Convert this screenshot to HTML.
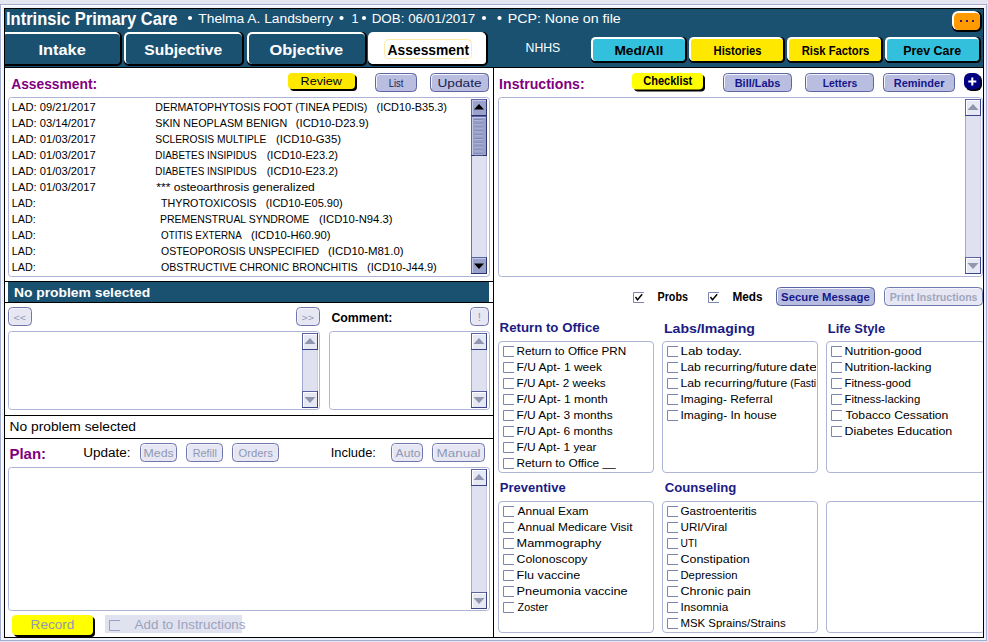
<!DOCTYPE html><html><head><meta charset="utf-8"><style>html,body{margin:0;padding:0;background:#e4e6f2;overflow:hidden}</style></head><body><svg width="988" height="642" viewBox="0 0 988 642" font-family='"Liberation Sans", sans-serif' style="display:block">
<rect x="0" y="0" width="988" height="642" fill="#e4e6f2" />
<rect x="0" y="4" width="987" height="637" fill="#a4acd0" />
<rect x="1" y="5" width="985" height="635" fill="#f0f2fc" />
<rect x="1" y="5" width="985" height="1" fill="#fff" />
<rect x="1" y="5" width="1" height="635" fill="#fff" />
<rect x="4" y="8" width="980" height="630" fill="#000" />
<rect x="5" y="9" width="978" height="628" fill="#fff" />
<defs><clipPath id="main"><rect x="5" y="9" width="978" height="628"/></clipPath></defs>
<g clip-path="url(#main)">
<rect x="5" y="9" width="978" height="58" fill="#1b5170" />
<text x="6.00" y="25" font-size="18" font-weight="bold" fill="#fff" textLength="171.50" lengthAdjust="spacingAndGlyphs" style="white-space:pre" >Intrinsic Primary Care</text>
<circle cx="190" cy="18" r="2.1" fill="#fff"/>
<circle cx="341.5" cy="18" r="2.1" fill="#fff"/>
<circle cx="364" cy="18" r="2.1" fill="#fff"/>
<circle cx="484" cy="18" r="2.1" fill="#fff"/>
<circle cx="499.5" cy="18" r="2.1" fill="#fff"/>
<text x="198.30" y="23" font-size="12.5" font-weight="normal" fill="#fff" textLength="134.90" lengthAdjust="spacingAndGlyphs" style="white-space:pre" >Thelma A. Landsberry</text>
<text x="351.50" y="23" font-size="12.5" font-weight="normal" fill="#fff" style="white-space:pre" >1</text>
<text x="371.70" y="23" font-size="12.5" font-weight="normal" fill="#fff" textLength="103.50" lengthAdjust="spacingAndGlyphs" style="white-space:pre" >DOB: 06/01/2017</text>
<text x="507.70" y="23" font-size="12.5" font-weight="normal" fill="#fff" textLength="113.10" lengthAdjust="spacingAndGlyphs" style="white-space:pre" >PCP: None on file</text>
<rect x="952" y="11" width="30" height="21" fill="#000" rx="6" ry="6" />
<rect x="952" y="11" width="28" height="19" fill="#fff" rx="6" ry="6" />
<rect x="954" y="13" width="26" height="17" fill="#ff9a00" rx="4.5" ry="4.5" />
<rect x="960" y="20" width="2" height="2" fill="#3a1a6a" />
<rect x="966" y="20" width="2" height="2" fill="#3a1a6a" />
<rect x="972" y="20" width="2" height="2" fill="#3a1a6a" />
<rect x="1" y="32" width="121" height="34" fill="#000" rx="5" ry="5" />
<rect x="1" y="32" width="119" height="32" fill="#fff" rx="5" ry="5" />
<rect x="3" y="34" width="117" height="30" fill="#1b5170" rx="3.5" ry="3.5" />
<text x="38.49" y="55" font-size="15" font-weight="bold" fill="#fff" textLength="47.32" lengthAdjust="spacingAndGlyphs" style="white-space:pre" >Intake</text>
<rect x="124" y="32" width="120" height="34" fill="#000" rx="5" ry="5" />
<rect x="124" y="32" width="118" height="32" fill="#fff" rx="5" ry="5" />
<rect x="126" y="34" width="116" height="30" fill="#1b5170" rx="3.5" ry="3.5" />
<text x="144.30" y="55" font-size="15" font-weight="bold" fill="#fff" textLength="77.90" lengthAdjust="spacingAndGlyphs" style="white-space:pre" >Subjective</text>
<rect x="247" y="32" width="120" height="34" fill="#000" rx="5" ry="5" />
<rect x="247" y="32" width="118" height="32" fill="#fff" rx="5" ry="5" />
<rect x="249" y="34" width="116" height="30" fill="#1b5170" rx="3.5" ry="3.5" />
<text x="269.50" y="55" font-size="15" font-weight="bold" fill="#fff" textLength="73.70" lengthAdjust="spacingAndGlyphs" style="white-space:pre" >Objective</text>
<rect x="368" y="32" width="120" height="34" fill="#000" rx="5" ry="5" />
<rect x="368" y="32" width="118" height="32" fill="#fff" rx="5" ry="5" />
<rect x="370" y="34" width="116" height="30" fill="#fff" rx="3.5" ry="3.5" />
<rect x="384.5" y="39.5" width="87" height="19" fill="none" stroke="#fde9a8" stroke-width="1" rx="4" ry="4" />
<text x="387.60" y="55" font-size="15" font-weight="bold" fill="#000" textLength="81.50" lengthAdjust="spacingAndGlyphs" style="white-space:pre" >Assessment</text>
<text x="525.60" y="52" font-size="12" font-weight="normal" fill="#fff" textLength="34.70" lengthAdjust="spacingAndGlyphs" style="white-space:pre" >NHHS</text>
<rect x="591" y="37" width="96" height="26" fill="#000" rx="4.5" ry="4.5" />
<rect x="591" y="37" width="94" height="24" fill="#fff" rx="4.5" ry="4.5" />
<rect x="593" y="39" width="92" height="22" fill="#33c0dc" rx="3.0" ry="3.0" />
<text x="614.40" y="54.7" font-size="12" font-weight="bold" fill="#000" textLength="48.91" lengthAdjust="spacingAndGlyphs" style="white-space:pre" >Med/All</text>
<rect x="689" y="37" width="96" height="26" fill="#000" rx="4.5" ry="4.5" />
<rect x="689" y="37" width="94" height="24" fill="#fff" rx="4.5" ry="4.5" />
<rect x="691" y="39" width="92" height="22" fill="#ffe800" rx="3.0" ry="3.0" />
<text x="713.60" y="54.7" font-size="12" font-weight="bold" fill="#000" textLength="47.91" lengthAdjust="spacingAndGlyphs" style="white-space:pre" >Histories</text>
<rect x="787" y="37" width="96" height="26" fill="#000" rx="4.5" ry="4.5" />
<rect x="787" y="37" width="94" height="24" fill="#fff" rx="4.5" ry="4.5" />
<rect x="789" y="39" width="92" height="22" fill="#ffe800" rx="3.0" ry="3.0" />
<text x="801.70" y="54.7" font-size="12" font-weight="bold" fill="#000" textLength="67.70" lengthAdjust="spacingAndGlyphs" style="white-space:pre" >Risk Factors</text>
<rect x="885" y="37" width="96" height="26" fill="#000" rx="4.5" ry="4.5" />
<rect x="885" y="37" width="94" height="24" fill="#fff" rx="4.5" ry="4.5" />
<rect x="887" y="39" width="92" height="22" fill="#33c0dc" rx="3.0" ry="3.0" />
<text x="903.20" y="54.7" font-size="12" font-weight="bold" fill="#000" textLength="58.10" lengthAdjust="spacingAndGlyphs" style="white-space:pre" >Prev Care</text>
<rect x="4" y="67" width="980" height="1" fill="#000" />
<rect x="493" y="67" width="1" height="570" fill="#000" />
<text x="11.20" y="89" font-size="15" font-weight="bold" fill="#800080" textLength="85.90" lengthAdjust="spacingAndGlyphs" style="white-space:pre" >Assessment:</text>
<rect x="290" y="75" width="67" height="16" fill="#000" rx="4" ry="4" />
<rect x="288" y="73" width="67" height="16" fill="#ffe800" rx="4" ry="4" />
<text x="300.61" y="85" font-size="11.5" font-weight="normal" fill="#000" textLength="41.29" lengthAdjust="spacingAndGlyphs" style="white-space:pre" >Review</text>
<rect x="375.5" y="73.5" width="41" height="18" fill="#b9bee0" stroke="#5e66a2" stroke-width="1" rx="4" ry="4" />
<path d="M376.5,87.5 V77.5 Q376.5,74.5 379.5,74.5 H412" fill="none" stroke="#f4f5fc" stroke-width="1"/>
<text x="388.76" y="86.7" font-size="11" font-weight="normal" fill="#202050" textLength="14.66" lengthAdjust="spacingAndGlyphs" style="white-space:pre" >List</text>
<rect x="430.5" y="73.5" width="58" height="18" fill="#b9bee0" stroke="#5e66a2" stroke-width="1" rx="4" ry="4" />
<path d="M431.5,87.5 V77.5 Q431.5,74.5 434.5,74.5 H484" fill="none" stroke="#f4f5fc" stroke-width="1"/>
<text x="437.49" y="86.7" font-size="11" font-weight="normal" fill="#202050" textLength="44.11" lengthAdjust="spacingAndGlyphs" style="white-space:pre" >Update</text>
<rect x="8.5" y="97.5" width="481" height="179" fill="#fff" stroke="#aeb4d6" stroke-width="1" rx="3" ry="3" />
<text x="11.80" y="110.8" font-size="11" font-weight="normal" fill="#000" textLength="83.90" lengthAdjust="spacingAndGlyphs" style="white-space:pre" >LAD: 09/21/2017</text>
<text x="155.30" y="110.8" font-size="11" font-weight="normal" fill="#000" textLength="212.10" lengthAdjust="spacingAndGlyphs" style="white-space:pre" >DERMATOPHYTOSIS FOOT (TINEA PEDIS)</text>
<text x="376.50" y="110.8" font-size="11" font-weight="normal" fill="#000" textLength="70.50" lengthAdjust="spacingAndGlyphs" style="white-space:pre" >(ICD10-B35.3)</text>
<text x="11.80" y="126.8" font-size="11" font-weight="normal" fill="#000" textLength="83.90" lengthAdjust="spacingAndGlyphs" style="white-space:pre" >LAD: 03/14/2017</text>
<text x="155.30" y="126.8" font-size="11" font-weight="normal" fill="#000" textLength="131.90" lengthAdjust="spacingAndGlyphs" style="white-space:pre" >SKIN NEOPLASM BENIGN</text>
<text x="295.80" y="126.8" font-size="11" font-weight="normal" fill="#000" textLength="72.90" lengthAdjust="spacingAndGlyphs" style="white-space:pre" >(ICD10-D23.9)</text>
<text x="11.80" y="142.8" font-size="11" font-weight="normal" fill="#000" textLength="83.90" lengthAdjust="spacingAndGlyphs" style="white-space:pre" >LAD: 01/03/2017</text>
<text x="155.30" y="142.8" font-size="11" font-weight="normal" fill="#000" textLength="111.10" lengthAdjust="spacingAndGlyphs" style="white-space:pre" >SCLEROSIS MULTIPLE</text>
<text x="276.10" y="142.8" font-size="11" font-weight="normal" fill="#000" textLength="64.89" lengthAdjust="spacingAndGlyphs" style="white-space:pre" >(ICD10-G35)</text>
<text x="11.80" y="158.8" font-size="11" font-weight="normal" fill="#000" textLength="83.90" lengthAdjust="spacingAndGlyphs" style="white-space:pre" >LAD: 01/03/2017</text>
<text x="155.31" y="158.8" font-size="11" font-weight="normal" fill="#000" textLength="101.29" lengthAdjust="spacingAndGlyphs" style="white-space:pre" >DIABETES INSIPIDUS</text>
<text x="266.70" y="158.8" font-size="11" font-weight="normal" fill="#000" textLength="71.30" lengthAdjust="spacingAndGlyphs" style="white-space:pre" >(ICD10-E23.2)</text>
<text x="11.80" y="174.8" font-size="11" font-weight="normal" fill="#000" textLength="83.90" lengthAdjust="spacingAndGlyphs" style="white-space:pre" >LAD: 01/03/2017</text>
<text x="155.31" y="174.8" font-size="11" font-weight="normal" fill="#000" textLength="101.29" lengthAdjust="spacingAndGlyphs" style="white-space:pre" >DIABETES INSIPIDUS</text>
<text x="266.70" y="174.8" font-size="11" font-weight="normal" fill="#000" textLength="71.30" lengthAdjust="spacingAndGlyphs" style="white-space:pre" >(ICD10-E23.2)</text>
<text x="11.80" y="190.8" font-size="11" font-weight="normal" fill="#000" textLength="83.90" lengthAdjust="spacingAndGlyphs" style="white-space:pre" >LAD: 01/03/2017</text>
<text x="156.30" y="190.8" font-size="11" font-weight="normal" fill="#000" textLength="158.50" lengthAdjust="spacingAndGlyphs" style="white-space:pre" >*** osteoarthrosis generalized</text>
<text x="11.79" y="206.8" font-size="11" font-weight="normal" fill="#000" textLength="23.92" lengthAdjust="spacingAndGlyphs" style="white-space:pre" >LAD:</text>
<text x="161.00" y="206.8" font-size="11" font-weight="normal" fill="#000" textLength="95.49" lengthAdjust="spacingAndGlyphs" style="white-space:pre" >THYROTOXICOSIS</text>
<text x="265.70" y="206.8" font-size="11" font-weight="normal" fill="#000" textLength="77.11" lengthAdjust="spacingAndGlyphs" style="white-space:pre" >(ICD10-E05.90)</text>
<text x="11.79" y="222.8" font-size="11" font-weight="normal" fill="#000" textLength="23.92" lengthAdjust="spacingAndGlyphs" style="white-space:pre" >LAD:</text>
<text x="160.00" y="222.8" font-size="11" font-weight="normal" fill="#000" textLength="149.30" lengthAdjust="spacingAndGlyphs" style="white-space:pre" >PREMENSTRUAL SYNDROME</text>
<text x="319.09" y="222.8" font-size="11" font-weight="normal" fill="#000" textLength="73.51" lengthAdjust="spacingAndGlyphs" style="white-space:pre" >(ICD10-N94.3)</text>
<text x="11.79" y="238.8" font-size="11" font-weight="normal" fill="#000" textLength="23.92" lengthAdjust="spacingAndGlyphs" style="white-space:pre" >LAD:</text>
<text x="161.00" y="238.8" font-size="11" font-weight="normal" fill="#000" textLength="80.70" lengthAdjust="spacingAndGlyphs" style="white-space:pre" >OTITIS EXTERNA</text>
<text x="250.99" y="238.8" font-size="11" font-weight="normal" fill="#000" textLength="79.51" lengthAdjust="spacingAndGlyphs" style="white-space:pre" >(ICD10-H60.90)</text>
<text x="11.79" y="254.8" font-size="11" font-weight="normal" fill="#000" textLength="23.92" lengthAdjust="spacingAndGlyphs" style="white-space:pre" >LAD:</text>
<text x="161.00" y="254.8" font-size="11" font-weight="normal" fill="#000" textLength="158.10" lengthAdjust="spacingAndGlyphs" style="white-space:pre" >OSTEOPOROSIS UNSPECIFIED</text>
<text x="327.91" y="254.8" font-size="11" font-weight="normal" fill="#000" textLength="75.69" lengthAdjust="spacingAndGlyphs" style="white-space:pre" >(ICD10-M81.0)</text>
<text x="11.79" y="270.8" font-size="11" font-weight="normal" fill="#000" textLength="23.92" lengthAdjust="spacingAndGlyphs" style="white-space:pre" >LAD:</text>
<text x="161.00" y="270.8" font-size="11" font-weight="normal" fill="#000" textLength="196.70" lengthAdjust="spacingAndGlyphs" style="white-space:pre" >OBSTRUCTIVE CHRONIC BRONCHITIS</text>
<text x="367.10" y="270.8" font-size="11" font-weight="normal" fill="#000" textLength="69.70" lengthAdjust="spacingAndGlyphs" style="white-space:pre" >(ICD10-J44.9)</text>
<rect x="471" y="99" width="16" height="175" fill="#dfe1f0" />
<rect x="471" y="99" width="1" height="175" fill="#6a72ac" />
<rect x="486" y="99" width="1" height="175" fill="#c4c8e4" />
<rect x="471" y="99" width="16" height="17" fill="#2a3270" />
<rect x="471" y="99" width="15" height="16" fill="#5a64a0" />
<rect x="472" y="100" width="14" height="15" fill="#c2c8e8" />
<rect x="473" y="101" width="13" height="14" fill="#9aa2cb" />
<path d="M479.0,104 L484.0,109.5 L474.0,109.5 Z" fill="#000"/>
<rect x="471" y="116" width="16" height="40" fill="#2a3270" />
<rect x="471" y="116" width="15" height="39" fill="#5a64a0" />
<rect x="472" y="117" width="14" height="38" fill="#c2c8e8" />
<rect x="473" y="118" width="13" height="37" fill="#98a0c8" />
<path d="M474,119.5 H483" stroke="#8088b4" stroke-width="1"/>
<path d="M474,120.5 H483" stroke="#aeb4d8" stroke-width="1"/>
<path d="M474,123.3 H483" stroke="#8088b4" stroke-width="1"/>
<path d="M474,124.3 H483" stroke="#aeb4d8" stroke-width="1"/>
<path d="M474,127.1 H483" stroke="#8088b4" stroke-width="1"/>
<path d="M474,128.1 H483" stroke="#aeb4d8" stroke-width="1"/>
<path d="M474,130.9 H483" stroke="#8088b4" stroke-width="1"/>
<path d="M474,131.9 H483" stroke="#aeb4d8" stroke-width="1"/>
<path d="M474,134.7 H483" stroke="#8088b4" stroke-width="1"/>
<path d="M474,135.7 H483" stroke="#aeb4d8" stroke-width="1"/>
<path d="M474,138.5 H483" stroke="#8088b4" stroke-width="1"/>
<path d="M474,139.5 H483" stroke="#aeb4d8" stroke-width="1"/>
<path d="M474,142.3 H483" stroke="#8088b4" stroke-width="1"/>
<path d="M474,143.3 H483" stroke="#aeb4d8" stroke-width="1"/>
<path d="M474,146.1 H483" stroke="#8088b4" stroke-width="1"/>
<path d="M474,147.1 H483" stroke="#aeb4d8" stroke-width="1"/>
<path d="M474,149.9 H483" stroke="#8088b4" stroke-width="1"/>
<path d="M474,150.9 H483" stroke="#aeb4d8" stroke-width="1"/>
<path d="M474,153.7 H483" stroke="#8088b4" stroke-width="1"/>
<path d="M474,154.7 H483" stroke="#aeb4d8" stroke-width="1"/>
<rect x="471" y="257" width="16" height="17" fill="#2a3270" />
<rect x="471" y="257" width="15" height="16" fill="#5a64a0" />
<rect x="472" y="258" width="14" height="15" fill="#c2c8e8" />
<rect x="473" y="259" width="13" height="14" fill="#9aa2cb" />
<path d="M479.0,269 L484.0,263.5 L474.0,263.5 Z" fill="#000"/>
<rect x="4" y="281" width="489" height="1" fill="#000" />
<rect x="8" y="282" width="481" height="20" fill="#1b5170" />
<text x="14.00" y="297" font-size="13" font-weight="bold" fill="#fff" textLength="136.10" lengthAdjust="spacingAndGlyphs" style="white-space:pre" >No problem selected</text>
<rect x="4" y="302" width="489" height="1" fill="#000" />
<rect x="8.5" y="307.5" width="23" height="18" fill="#e6e7f3" stroke="#6e76ac" stroke-width="1" rx="4" ry="4" />
<path d="M9.5,321.5 V311.5 Q9.5,308.5 12.5,308.5 H27" fill="none" stroke="#f4f5fc" stroke-width="1"/>
<text x="13.50" y="320.5" font-size="9" font-weight="normal" fill="#9098b4" textLength="12.50" lengthAdjust="spacingAndGlyphs" style="white-space:pre" >&lt;&lt;</text>
<rect x="296.5" y="307.5" width="23" height="18" fill="#e6e7f3" stroke="#6e76ac" stroke-width="1" rx="4" ry="4" />
<path d="M297.5,321.5 V311.5 Q297.5,308.5 300.5,308.5 H315" fill="none" stroke="#f4f5fc" stroke-width="1"/>
<text x="301.50" y="320.5" font-size="9" font-weight="normal" fill="#9098b4" textLength="12.50" lengthAdjust="spacingAndGlyphs" style="white-space:pre" >&gt;&gt;</text>
<text x="331.40" y="322" font-size="12" font-weight="bold" fill="#000" textLength="61.10" lengthAdjust="spacingAndGlyphs" style="white-space:pre" >Comment:</text>
<rect x="470.5" y="307.5" width="18" height="18" fill="#e6e7f3" stroke="#6e76ac" stroke-width="1" rx="4" ry="4" />
<path d="M471.5,321.5 V311.5 Q471.5,308.5 474.5,308.5 H484" fill="none" stroke="#f4f5fc" stroke-width="1"/>
<text x="477.80" y="321" font-size="11" font-weight="normal" fill="#9098b4" textLength="3.24" lengthAdjust="spacingAndGlyphs" style="white-space:pre" >!</text>
<rect x="8.5" y="331.5" width="311" height="78" fill="#fff" stroke="#aeb4d6" stroke-width="1" rx="3" ry="3" />
<rect x="302" y="333" width="16" height="75" fill="#dfe1f0" />
<rect x="302" y="333" width="1" height="75" fill="#a0a8d4" />
<rect x="317" y="333" width="1" height="75" fill="#c8cce6" />
<rect x="302" y="333" width="16" height="17" fill="#3a4288" />
<rect x="302" y="333" width="15" height="16" fill="#5a62a4" />
<rect x="303" y="334" width="14" height="15" fill="#ffffff" />
<rect x="304" y="335" width="13" height="14" fill="#e6e8f4" />
<path d="M310.0,338 L315.5,344 L304.5,344 Z" fill="#9096ae"/>
<rect x="302" y="391" width="16" height="17" fill="#3a4288" />
<rect x="302" y="391" width="15" height="16" fill="#5a62a4" />
<rect x="303" y="392" width="14" height="15" fill="#ffffff" />
<rect x="304" y="393" width="13" height="14" fill="#e6e8f4" />
<path d="M310.0,403 L315.5,397 L304.5,397 Z" fill="#9096ae"/>
<rect x="329.5" y="331.5" width="160" height="78" fill="#fff" stroke="#aeb4d6" stroke-width="1" rx="3" ry="3" />
<rect x="471" y="333" width="16" height="75" fill="#dfe1f0" />
<rect x="471" y="333" width="1" height="75" fill="#a0a8d4" />
<rect x="486" y="333" width="1" height="75" fill="#c8cce6" />
<rect x="471" y="333" width="16" height="17" fill="#3a4288" />
<rect x="471" y="333" width="15" height="16" fill="#5a62a4" />
<rect x="472" y="334" width="14" height="15" fill="#ffffff" />
<rect x="473" y="335" width="13" height="14" fill="#e6e8f4" />
<path d="M479.0,338 L484.5,344 L473.5,344 Z" fill="#9096ae"/>
<rect x="471" y="391" width="16" height="17" fill="#3a4288" />
<rect x="471" y="391" width="15" height="16" fill="#5a62a4" />
<rect x="472" y="392" width="14" height="15" fill="#ffffff" />
<rect x="473" y="393" width="13" height="14" fill="#e6e8f4" />
<path d="M479.0,403 L484.5,397 L473.5,397 Z" fill="#9096ae"/>
<rect x="4" y="415" width="489" height="1" fill="#000" />
<text x="9.50" y="431" font-size="12" font-weight="normal" fill="#000" textLength="126.51" lengthAdjust="spacingAndGlyphs" style="white-space:pre" >No problem selected</text>
<rect x="4" y="438" width="489" height="1" fill="#000" />
<text x="9.47" y="458.5" font-size="15" font-weight="bold" fill="#800080" textLength="36.58" lengthAdjust="spacingAndGlyphs" style="white-space:pre" >Plan:</text>
<text x="83.19" y="457" font-size="12" font-weight="normal" fill="#000" textLength="47.32" lengthAdjust="spacingAndGlyphs" style="white-space:pre" >Update:</text>
<rect x="140.5" y="443.5" width="36" height="18" fill="#e6e7f3" stroke="#6e76ac" stroke-width="1" rx="4" ry="4" />
<path d="M141.5,457.5 V447.5 Q141.5,444.5 144.5,444.5 H172" fill="none" stroke="#f4f5fc" stroke-width="1"/>
<text x="143.62" y="457" font-size="11" font-weight="normal" fill="#9098b4" textLength="30.08" lengthAdjust="spacingAndGlyphs" style="white-space:pre" >Meds</text>
<rect x="186.5" y="443.5" width="36" height="18" fill="#e6e7f3" stroke="#6e76ac" stroke-width="1" rx="4" ry="4" />
<path d="M187.5,457.5 V447.5 Q187.5,444.5 190.5,444.5 H218" fill="none" stroke="#f4f5fc" stroke-width="1"/>
<text x="192.69" y="457" font-size="11" font-weight="normal" fill="#9098b4" textLength="24.12" lengthAdjust="spacingAndGlyphs" style="white-space:pre" >Refill</text>
<rect x="232.5" y="443.5" width="46" height="18" fill="#e6e7f3" stroke="#6e76ac" stroke-width="1" rx="4" ry="4" />
<path d="M233.5,457.5 V447.5 Q233.5,444.5 236.5,444.5 H274" fill="none" stroke="#f4f5fc" stroke-width="1"/>
<text x="238.40" y="457" font-size="11" font-weight="normal" fill="#9098b4" textLength="34.50" lengthAdjust="spacingAndGlyphs" style="white-space:pre" >Orders</text>
<rect x="391.5" y="443.5" width="31" height="18" fill="#e6e7f3" stroke="#6e76ac" stroke-width="1" rx="4" ry="4" />
<path d="M392.5,457.5 V447.5 Q392.5,444.5 395.5,444.5 H418" fill="none" stroke="#f4f5fc" stroke-width="1"/>
<text x="395.60" y="457" font-size="11" font-weight="normal" fill="#9098b4" textLength="24.88" lengthAdjust="spacingAndGlyphs" style="white-space:pre" >Auto</text>
<rect x="432.5" y="443.5" width="52" height="18" fill="#e6e7f3" stroke="#6e76ac" stroke-width="1" rx="4" ry="4" />
<path d="M433.5,457.5 V447.5 Q433.5,444.5 436.5,444.5 H480" fill="none" stroke="#f4f5fc" stroke-width="1"/>
<text x="436.50" y="457" font-size="11" font-weight="normal" fill="#9098b4" textLength="44.09" lengthAdjust="spacingAndGlyphs" style="white-space:pre" >Manual</text>
<text x="330.78" y="457" font-size="12" font-weight="normal" fill="#000" textLength="45.14" lengthAdjust="spacingAndGlyphs" style="white-space:pre" >Include:</text>
<rect x="8.5" y="467.5" width="481" height="143" fill="#fff" stroke="#aeb4d6" stroke-width="1" rx="3" ry="3" />
<rect x="471" y="469" width="16" height="140" fill="#dfe1f0" />
<rect x="471" y="469" width="1" height="140" fill="#a0a8d4" />
<rect x="486" y="469" width="1" height="140" fill="#c8cce6" />
<rect x="471" y="469" width="16" height="17" fill="#3a4288" />
<rect x="471" y="469" width="15" height="16" fill="#5a62a4" />
<rect x="472" y="470" width="14" height="15" fill="#ffffff" />
<rect x="473" y="471" width="13" height="14" fill="#e6e8f4" />
<path d="M479.0,474 L484.5,480 L473.5,480 Z" fill="#9096ae"/>
<rect x="471" y="592" width="16" height="17" fill="#3a4288" />
<rect x="471" y="592" width="15" height="16" fill="#5a62a4" />
<rect x="472" y="593" width="14" height="15" fill="#ffffff" />
<rect x="473" y="594" width="13" height="14" fill="#e6e8f4" />
<path d="M479.0,604 L484.5,598 L473.5,598 Z" fill="#9096ae"/>
<rect x="14" y="617" width="81" height="20" fill="#000" rx="4" ry="4" />
<rect x="12" y="615" width="81" height="20" fill="#ffff00" rx="4" ry="4" />
<text x="30.60" y="629.3" font-size="12" font-weight="normal" fill="#9098b4" textLength="43.70" lengthAdjust="spacingAndGlyphs" style="white-space:pre" >Record</text>
<rect x="105" y="615" width="137" height="18" fill="#e0e2f0" />
<path d="M120,620.5 H109.5 V630.5 H120" fill="none" stroke="#9aa0c4" stroke-width="1"/>
<text x="134.60" y="629.3" font-size="12" font-weight="normal" fill="#9ca2bc" textLength="110.89" lengthAdjust="spacingAndGlyphs" style="white-space:pre" >Add to Instructions</text>
<text x="499.09" y="89" font-size="15" font-weight="bold" fill="#800080" textLength="85.51" lengthAdjust="spacingAndGlyphs" style="white-space:pre" >Instructions:</text>
<rect x="634" y="75" width="71" height="16.5" fill="#000" rx="4" ry="4" />
<rect x="632" y="73" width="71" height="16.5" fill="#ffff00" rx="4" ry="4" />
<text x="643.20" y="85.2" font-size="12" font-weight="bold" fill="#000" textLength="49.09" lengthAdjust="spacingAndGlyphs" style="white-space:pre" >Checklist</text>
<rect x="723.5" y="73.5" width="68" height="18" fill="#b9bee0" stroke="#5e66a2" stroke-width="1" rx="4" ry="4" />
<path d="M724.5,87.5 V77.5 Q724.5,74.5 727.5,74.5 H787" fill="none" stroke="#f4f5fc" stroke-width="1"/>
<text x="734.70" y="87" font-size="11.5" font-weight="bold" fill="#16168a" textLength="45.70" lengthAdjust="spacingAndGlyphs" style="white-space:pre" >Bill/Labs</text>
<rect x="805.5" y="73.5" width="68" height="18" fill="#b9bee0" stroke="#5e66a2" stroke-width="1" rx="4" ry="4" />
<path d="M806.5,87.5 V77.5 Q806.5,74.5 809.5,74.5 H869" fill="none" stroke="#f4f5fc" stroke-width="1"/>
<text x="822.70" y="87" font-size="11.5" font-weight="bold" fill="#16168a" textLength="34.70" lengthAdjust="spacingAndGlyphs" style="white-space:pre" >Letters</text>
<rect x="883.5" y="73.5" width="71" height="18" fill="#b9bee0" stroke="#5e66a2" stroke-width="1" rx="4" ry="4" />
<path d="M884.5,87.5 V77.5 Q884.5,74.5 887.5,74.5 H950" fill="none" stroke="#f4f5fc" stroke-width="1"/>
<text x="893.72" y="87" font-size="11.5" font-weight="bold" fill="#16168a" textLength="50.69" lengthAdjust="spacingAndGlyphs" style="white-space:pre" >Reminder</text>
<rect x="965.5" y="74.5" width="16.5" height="16.5" fill="#000" rx="6" ry="6" />
<rect x="964" y="73" width="16.5" height="16.5" fill="#000080" rx="6" ry="6" />
<path d="M972.3,77.6 V85.6 M968.3,81.6 H976.3" stroke="#fff" stroke-width="2"/>
<rect x="498.5" y="97.5" width="484" height="179" fill="#fff" stroke="#aeb4d6" stroke-width="1" rx="3" ry="3" />
<rect x="965" y="99" width="16" height="175" fill="#dfe1f0" />
<rect x="965" y="99" width="1" height="175" fill="#a0a8d4" />
<rect x="980" y="99" width="1" height="175" fill="#c8cce6" />
<rect x="965" y="99" width="16" height="17" fill="#3a4288" />
<rect x="965" y="99" width="15" height="16" fill="#5a62a4" />
<rect x="966" y="100" width="14" height="15" fill="#ffffff" />
<rect x="967" y="101" width="13" height="14" fill="#e6e8f4" />
<path d="M973.0,104 L978.5,110 L967.5,110 Z" fill="#9096ae"/>
<rect x="965" y="257" width="16" height="17" fill="#3a4288" />
<rect x="965" y="257" width="15" height="16" fill="#5a62a4" />
<rect x="966" y="258" width="14" height="15" fill="#ffffff" />
<rect x="967" y="259" width="13" height="14" fill="#e6e8f4" />
<path d="M973.0,269 L978.5,263 L967.5,263 Z" fill="#9096ae"/>
<path d="M644,292.5 H633.5 V302.5 H644" fill="none" stroke="#7c84b0" stroke-width="1"/>
<path d="M635.5,297 L637.5,299.8 L642.2,294.2" fill="none" stroke="#000" stroke-width="1.4"/>
<text x="657.52" y="301.1" font-size="12" font-weight="bold" fill="#000" textLength="30.48" lengthAdjust="spacingAndGlyphs" style="white-space:pre" >Probs</text>
<path d="M719,292.5 H708.5 V302.5 H719" fill="none" stroke="#7c84b0" stroke-width="1"/>
<path d="M710.5,297 L712.5,299.8 L717.2,294.2" fill="none" stroke="#000" stroke-width="1.4"/>
<text x="732.39" y="301.1" font-size="12" font-weight="bold" fill="#000" textLength="30.12" lengthAdjust="spacingAndGlyphs" style="white-space:pre" >Meds</text>
<rect x="776.5" y="287.5" width="98" height="18" fill="#b6bce0" stroke="#5a62a0" stroke-width="1" rx="4" ry="4" />
<path d="M777.5,301.5 V291.5 Q777.5,288.5 780.5,288.5 H870" fill="none" stroke="#f4f5fc" stroke-width="1"/>
<text x="781.10" y="300.7" font-size="11.5" font-weight="bold" fill="#16168a" textLength="88.70" lengthAdjust="spacingAndGlyphs" style="white-space:pre" >Secure Message</text>
<rect x="884.5" y="287.5" width="98" height="18" fill="#e6e7f3" stroke="#7078b0" stroke-width="1" rx="4" ry="4" />
<path d="M885.5,301.5 V291.5 Q885.5,288.5 888.5,288.5 H978" fill="none" stroke="#f4f5fc" stroke-width="1"/>
<text x="889.80" y="300.7" font-size="11.5" font-weight="bold" fill="#a0a6c0" textLength="87.70" lengthAdjust="spacingAndGlyphs" style="white-space:pre" >Print Instructions</text>
<defs>
<clipPath id="c0"><rect x="499" y="342" width="153" height="131"/></clipPath>
<clipPath id="c1"><rect x="663" y="342" width="153" height="131"/></clipPath>
<clipPath id="c2"><rect x="827" y="342" width="156" height="131"/></clipPath>
<clipPath id="c3"><rect x="499" y="502" width="153" height="131"/></clipPath>
<clipPath id="c4"><rect x="663" y="502" width="153" height="131"/></clipPath>
<clipPath id="c5"><rect x="827" y="502" width="156" height="131"/></clipPath>
</defs>
<text x="499.60" y="332.3" font-size="13" font-weight="bold" fill="#1b1b82" textLength="100.10" lengthAdjust="spacingAndGlyphs" style="white-space:pre" >Return to Office</text>
<rect x="498.5" y="341.5" width="155" height="131" fill="#fff" stroke="#aeb4d6" stroke-width="1" rx="3.5" ry="3.5" />
<g clip-path="url(#c0)">
<path d="M514,346.5 H503.5 V356.5 H514" fill="none" stroke="#7c84b0" stroke-width="1"/>
<text x="516.50" y="355" font-size="11.5" font-weight="normal" fill="#000" textLength="109.70" lengthAdjust="spacingAndGlyphs" style="white-space:pre" >Return to Office PRN</text>
<path d="M514,362.5 H503.5 V372.5 H514" fill="none" stroke="#7c84b0" stroke-width="1"/>
<text x="516.51" y="371" font-size="11.5" font-weight="normal" fill="#000" textLength="85.49" lengthAdjust="spacingAndGlyphs" style="white-space:pre" >F/U Apt- 1 week</text>
<path d="M514,378.5 H503.5 V388.5 H514" fill="none" stroke="#7c84b0" stroke-width="1"/>
<text x="516.51" y="387" font-size="11.5" font-weight="normal" fill="#000" textLength="89.09" lengthAdjust="spacingAndGlyphs" style="white-space:pre" >F/U Apt- 2 weeks</text>
<path d="M514,394.5 H503.5 V404.5 H514" fill="none" stroke="#7c84b0" stroke-width="1"/>
<text x="516.50" y="403" font-size="11.5" font-weight="normal" fill="#000" textLength="91.10" lengthAdjust="spacingAndGlyphs" style="white-space:pre" >F/U Apt- 1 month</text>
<path d="M514,410.5 H503.5 V420.5 H514" fill="none" stroke="#7c84b0" stroke-width="1"/>
<text x="516.50" y="419" font-size="11.5" font-weight="normal" fill="#000" textLength="96.11" lengthAdjust="spacingAndGlyphs" style="white-space:pre" >F/U Apt- 3 months</text>
<path d="M514,426.5 H503.5 V436.5 H514" fill="none" stroke="#7c84b0" stroke-width="1"/>
<text x="516.50" y="435" font-size="11.5" font-weight="normal" fill="#000" textLength="96.11" lengthAdjust="spacingAndGlyphs" style="white-space:pre" >F/U Apt- 6 months</text>
<path d="M514,442.5 H503.5 V452.5 H514" fill="none" stroke="#7c84b0" stroke-width="1"/>
<text x="516.51" y="451" font-size="11.5" font-weight="normal" fill="#000" textLength="80.09" lengthAdjust="spacingAndGlyphs" style="white-space:pre" >F/U Apt- 1 year</text>
<path d="M514,458.5 H503.5 V468.5 H514" fill="none" stroke="#7c84b0" stroke-width="1"/>
<text x="516.51" y="467" font-size="11.5" font-weight="normal" fill="#000" textLength="99.09" lengthAdjust="spacingAndGlyphs" style="white-space:pre" >Return to Office __</text>
</g>
<text x="663.90" y="332.5" font-size="13" font-weight="bold" fill="#1b1b82" textLength="91.11" lengthAdjust="spacingAndGlyphs" style="white-space:pre" >Labs/Imaging</text>
<rect x="662.5" y="341.5" width="155" height="131" fill="#fff" stroke="#aeb4d6" stroke-width="1" rx="3.5" ry="3.5" />
<g clip-path="url(#c1)">
<path d="M678,346.5 H667.5 V356.5 H678" fill="none" stroke="#7c84b0" stroke-width="1"/>
<text x="680.49" y="355" font-size="11.5" font-weight="normal" fill="#000" textLength="61.52" lengthAdjust="spacingAndGlyphs" style="white-space:pre" >Lab today.</text>
<path d="M678,362.5 H667.5 V372.5 H678" fill="none" stroke="#7c84b0" stroke-width="1"/>
<text x="680.50" y="371" font-size="11.5" font-weight="normal" fill="#000" textLength="106.70" lengthAdjust="spacingAndGlyphs" style="white-space:pre" >Lab recurring/future</text>
<text x="789.52" y="371" font-size="11.5" font-weight="normal" fill="#000" textLength="27.48" lengthAdjust="spacingAndGlyphs" style="white-space:pre" >date</text>
<path d="M678,378.5 H667.5 V388.5 H678" fill="none" stroke="#7c84b0" stroke-width="1"/>
<text x="680.50" y="387" font-size="11.5" font-weight="normal" fill="#000" textLength="106.70" lengthAdjust="spacingAndGlyphs" style="white-space:pre" >Lab recurring/future</text>
<text x="790.19" y="387" font-size="11.5" font-weight="normal" fill="#000" textLength="40.91" lengthAdjust="spacingAndGlyphs" style="white-space:pre" >(Fasting)</text>
<path d="M678,394.5 H667.5 V404.5 H678" fill="none" stroke="#7c84b0" stroke-width="1"/>
<text x="680.50" y="403" font-size="11.5" font-weight="normal" fill="#000" textLength="92.10" lengthAdjust="spacingAndGlyphs" style="white-space:pre" >Imaging- Referral</text>
<path d="M678,410.5 H667.5 V420.5 H678" fill="none" stroke="#7c84b0" stroke-width="1"/>
<text x="680.50" y="419" font-size="11.5" font-weight="normal" fill="#000" textLength="96.10" lengthAdjust="spacingAndGlyphs" style="white-space:pre" >Imaging- In house</text>
</g>
<text x="827.80" y="332.5" font-size="13" font-weight="bold" fill="#1b1b82" textLength="57.30" lengthAdjust="spacingAndGlyphs" style="white-space:pre" >Life Style</text>
<rect x="826.5" y="341.5" width="158" height="131" fill="#fff" stroke="#aeb4d6" stroke-width="1" rx="3.5" ry="3.5" />
<g clip-path="url(#c2)">
<path d="M842,346.5 H831.5 V356.5 H842" fill="none" stroke="#7c84b0" stroke-width="1"/>
<text x="844.50" y="355" font-size="11.5" font-weight="normal" fill="#000" textLength="77.10" lengthAdjust="spacingAndGlyphs" style="white-space:pre" >Nutrition-good</text>
<path d="M842,362.5 H831.5 V372.5 H842" fill="none" stroke="#7c84b0" stroke-width="1"/>
<text x="844.50" y="371" font-size="11.5" font-weight="normal" fill="#000" textLength="86.90" lengthAdjust="spacingAndGlyphs" style="white-space:pre" >Nutrition-lacking</text>
<path d="M842,378.5 H831.5 V388.5 H842" fill="none" stroke="#7c84b0" stroke-width="1"/>
<text x="844.50" y="387" font-size="11.5" font-weight="normal" fill="#000" textLength="66.50" lengthAdjust="spacingAndGlyphs" style="white-space:pre" >Fitness-good</text>
<path d="M842,394.5 H831.5 V404.5 H842" fill="none" stroke="#7c84b0" stroke-width="1"/>
<text x="844.50" y="403" font-size="11.5" font-weight="normal" fill="#000" textLength="75.70" lengthAdjust="spacingAndGlyphs" style="white-space:pre" >Fitness-lacking</text>
<path d="M842,410.5 H831.5 V420.5 H842" fill="none" stroke="#7c84b0" stroke-width="1"/>
<text x="845.50" y="419" font-size="11.5" font-weight="normal" fill="#000" textLength="102.90" lengthAdjust="spacingAndGlyphs" style="white-space:pre" >Tobacco Cessation</text>
<path d="M842,426.5 H831.5 V436.5 H842" fill="none" stroke="#7c84b0" stroke-width="1"/>
<text x="844.50" y="435" font-size="11.5" font-weight="normal" fill="#000" textLength="107.70" lengthAdjust="spacingAndGlyphs" style="white-space:pre" >Diabetes Education</text>
</g>
<text x="499.80" y="492.1" font-size="13" font-weight="bold" fill="#1b1b82" textLength="65.89" lengthAdjust="spacingAndGlyphs" style="white-space:pre" >Preventive</text>
<rect x="498.5" y="501.5" width="155" height="131" fill="#fff" stroke="#aeb4d6" stroke-width="1" rx="3.5" ry="3.5" />
<g clip-path="url(#c3)">
<path d="M514,506.5 H503.5 V516.5 H514" fill="none" stroke="#7c84b0" stroke-width="1"/>
<text x="517.60" y="515" font-size="11.5" font-weight="normal" fill="#000" textLength="70.89" lengthAdjust="spacingAndGlyphs" style="white-space:pre" >Annual Exam</text>
<path d="M514,522.5 H503.5 V532.5 H514" fill="none" stroke="#7c84b0" stroke-width="1"/>
<text x="517.60" y="531" font-size="11.5" font-weight="normal" fill="#000" textLength="114.90" lengthAdjust="spacingAndGlyphs" style="white-space:pre" >Annual Medicare Visit</text>
<path d="M514,538.5 H503.5 V548.5 H514" fill="none" stroke="#7c84b0" stroke-width="1"/>
<text x="516.61" y="547" font-size="11.5" font-weight="normal" fill="#000" textLength="84.69" lengthAdjust="spacingAndGlyphs" style="white-space:pre" >Mammography</text>
<path d="M514,554.5 H503.5 V564.5 H514" fill="none" stroke="#7c84b0" stroke-width="1"/>
<text x="516.61" y="563" font-size="11.5" font-weight="normal" fill="#000" textLength="70.89" lengthAdjust="spacingAndGlyphs" style="white-space:pre" >Colonoscopy</text>
<path d="M514,570.5 H503.5 V580.5 H514" fill="none" stroke="#7c84b0" stroke-width="1"/>
<text x="516.60" y="579" font-size="11.5" font-weight="normal" fill="#000" textLength="63.70" lengthAdjust="spacingAndGlyphs" style="white-space:pre" >Flu vaccine</text>
<path d="M514,586.5 H503.5 V596.5 H514" fill="none" stroke="#7c84b0" stroke-width="1"/>
<text x="516.60" y="595" font-size="11.5" font-weight="normal" fill="#000" textLength="111.10" lengthAdjust="spacingAndGlyphs" style="white-space:pre" >Pneumonia vaccine</text>
<path d="M514,602.5 H503.5 V612.5 H514" fill="none" stroke="#7c84b0" stroke-width="1"/>
<text x="517.60" y="611" font-size="11.5" font-weight="normal" fill="#000" textLength="30.50" lengthAdjust="spacingAndGlyphs" style="white-space:pre" >Zoster</text>
</g>
<text x="664.70" y="492.1" font-size="13" font-weight="bold" fill="#1b1b82" textLength="71.69" lengthAdjust="spacingAndGlyphs" style="white-space:pre" >Counseling</text>
<rect x="662.5" y="501.5" width="155" height="131" fill="#fff" stroke="#aeb4d6" stroke-width="1" rx="3.5" ry="3.5" />
<g clip-path="url(#c4)">
<path d="M678,506.5 H667.5 V516.5 H678" fill="none" stroke="#7c84b0" stroke-width="1"/>
<text x="680.51" y="515" font-size="11.5" font-weight="normal" fill="#000" textLength="76.09" lengthAdjust="spacingAndGlyphs" style="white-space:pre" >Gastroenteritis</text>
<path d="M678,522.5 H667.5 V532.5 H678" fill="none" stroke="#7c84b0" stroke-width="1"/>
<text x="680.50" y="531" font-size="11.5" font-weight="normal" fill="#000" textLength="46.50" lengthAdjust="spacingAndGlyphs" style="white-space:pre" >URI/Viral</text>
<path d="M678,538.5 H667.5 V548.5 H678" fill="none" stroke="#7c84b0" stroke-width="1"/>
<text x="680.50" y="547" font-size="11.5" font-weight="normal" fill="#000" textLength="16.50" lengthAdjust="spacingAndGlyphs" style="white-space:pre" >UTI</text>
<path d="M678,554.5 H667.5 V564.5 H678" fill="none" stroke="#7c84b0" stroke-width="1"/>
<text x="680.50" y="563" font-size="11.5" font-weight="normal" fill="#000" textLength="69.30" lengthAdjust="spacingAndGlyphs" style="white-space:pre" >Constipation</text>
<path d="M678,570.5 H667.5 V580.5 H678" fill="none" stroke="#7c84b0" stroke-width="1"/>
<text x="680.51" y="579" font-size="11.5" font-weight="normal" fill="#000" textLength="56.89" lengthAdjust="spacingAndGlyphs" style="white-space:pre" >Depression</text>
<path d="M678,586.5 H667.5 V596.5 H678" fill="none" stroke="#7c84b0" stroke-width="1"/>
<text x="680.50" y="595" font-size="11.5" font-weight="normal" fill="#000" textLength="70.30" lengthAdjust="spacingAndGlyphs" style="white-space:pre" >Chronic pain</text>
<path d="M678,602.5 H667.5 V612.5 H678" fill="none" stroke="#7c84b0" stroke-width="1"/>
<text x="680.51" y="611" font-size="11.5" font-weight="normal" fill="#000" textLength="47.69" lengthAdjust="spacingAndGlyphs" style="white-space:pre" >Insomnia</text>
<path d="M678,618.5 H667.5 V628.5 H678" fill="none" stroke="#7c84b0" stroke-width="1"/>
<text x="680.50" y="627" font-size="11.5" font-weight="normal" fill="#000" textLength="105.11" lengthAdjust="spacingAndGlyphs" style="white-space:pre" >MSK Sprains/Strains</text>
</g>
<rect x="826.5" y="501.5" width="158" height="131" fill="#fff" stroke="#aeb4d6" stroke-width="1" rx="3.5" ry="3.5" />
<g clip-path="url(#c5)">
</g>
</g>
</svg></body></html>
